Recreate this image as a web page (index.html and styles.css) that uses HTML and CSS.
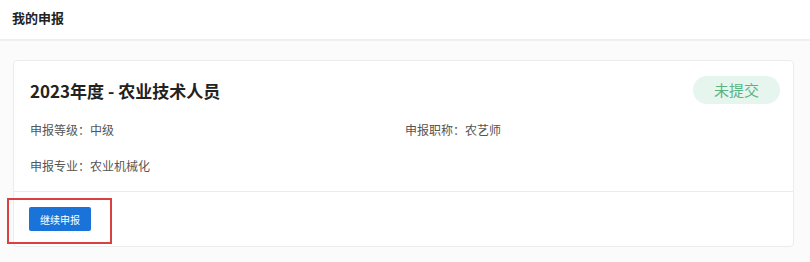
FILE: index.html
```html
<!DOCTYPE html>
<html lang="zh-CN">

<head>
    <meta charset="UTF-8">
    <meta name="viewport" content="width=device-width, initial-scale=1.0">
    <title>我的申报</title>
    <link rel="stylesheet" href="styles.css">
</head>

<body>
    <header class="page-header">
        <h1>我的申报</h1>
    </header>

    <main class="page-main">
        <div class="apply-card">
            <div class="apply-body">
                <div class="apply-head">
                    <h2 class="apply-title">2023年度 - 农业技术人员</h2>
                    <span class="status-tag">未提交</span>
                </div>
                <div class="apply-info">
                    <div class="info-item">申报等级：中级</div>
                    <div class="info-item">申报职称：农艺师</div>
                    <div class="info-item">申报专业：农业机械化</div>
                </div>
            </div>
            <div class="apply-foot">
                <span class="mark">
                    <button class="btn-primary">继续申报</button>
                </span>
            </div>
        </div>
    </main>
</body>

</html>
```

FILE: styles.css
```css
:root {
    --bg-page: #fbfbfb;
    --bg-card: #fff;
    --border: #ececec;
    --text: #222;
    --text-dim: #555;
    --primary: #1a73d8;
    --ok: #5ab383;
    --ok-bg: #e6f6ee;
    --mark: #d9403f;
}

* {
    box-sizing: border-box;
    margin: 0;
    padding: 0;
}

html,
body {
    background: var(--bg-page);
    color: var(--text);
    min-height: 100vh;
}

body {
    font-family: "Noto Sans CJK SC", "Noto Sans", sans-serif;
}

.page-header {
    height: 41px;
    background: #fff;
    border-bottom: 2px solid #efefef;
    padding-left: 12px;
    display: flex;
    align-items: center;
}

.page-header h1 {
    font-size: 13px;
    font-weight: 700;
    color: #222;
    margin-top: -4px;
}

.page-main {
    padding: 19px 16px 0 13px;
}

.apply-card {
    background: var(--bg-card);
    border: 1px solid var(--border);
    border-radius: 4px;
}

.apply-body {
    padding: 15px 13px 15px 16px;
}

.apply-head {
    display: flex;
    justify-content: space-between;
    align-items: center;
    height: 28px;
}

.apply-title {
    font-size: 17px;
    font-weight: 700;
    color: var(--text);
}

.status-tag {
    width: 87px;
    height: 28px;
    line-height: 28px;
    text-align: center;
    border-radius: 14px;
    background: var(--ok-bg);
    color: var(--ok);
    font-size: 15px;
}

.apply-info {
    display: grid;
    grid-template-columns: 1fr 1fr;
    row-gap: 16px;
    margin-top: 16px;
}

.info-item {
    font-size: 12px;
    line-height: 20px;
    color: var(--text-dim);
}

.apply-foot {
    border-top: 1px solid var(--border);
    padding: 15px 16px 15px 15px;
}

.mark {
    position: relative;
    display: inline-block;
    vertical-align: top;
}

/* annotation box round the button */
.mark::after {
    content: "";
    position: absolute;
    left: -22px;
    top: -9px;
    width: 101px;
    height: 42px;
    border: 2px solid var(--mark);
}

.btn-primary {
    display: block;
    width: 62px;
    height: 24px;
    background: var(--primary);
    color: #fff;
    border: none;
    border-radius: 2px;
    font-family: inherit;
    font-size: 10px;
}
```
